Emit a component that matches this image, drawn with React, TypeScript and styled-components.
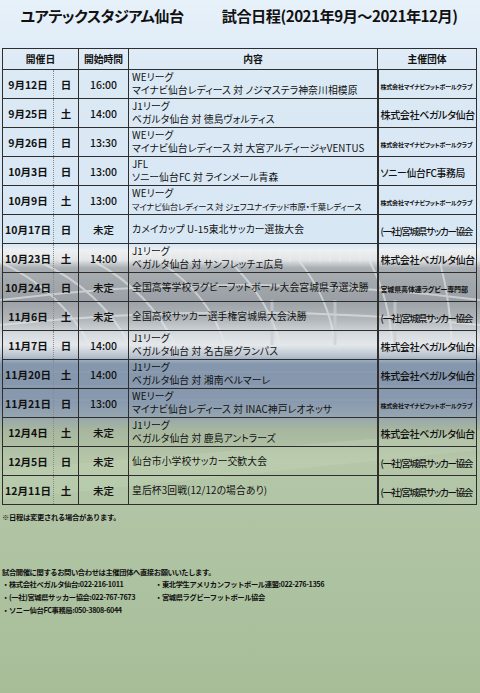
import styled, { createGlobalStyle } from "styled-components";

const GlobalStyle = createGlobalStyle`
  html, body {
    margin: 0;
    padding: 0;
  }
  body {
    font-family: "Noto Sans CJK JP", "Noto Sans", sans-serif;
    color: #111;
  }
`;

const Page = styled.div`
  position: relative;
  width: 480px;
  height: 693px;
  overflow: hidden;
  background: linear-gradient(
    to bottom,
    #e7f1fa 0px,
    #dbe9f5 80px,
    #d8e7f4 245px,
    #eef0f1 250px,
    #e2e5e7 260px,
    #a9aeb2 268px,
    #9aa0a5 300px,
    #b2b7bb 320px,
    #d6dbdf 334px,
    #e4e8eb 345px,
    #b9c3cf 356px,
    #8597ad 364px,
    #8899af 400px,
    #94a4b0 415px,
    #a7b79e 430px,
    #b5c6a9 460px,
    #aec3a2 560px,
    #a7bd98 693px
  );
`;

const Backdrop = styled.svg`
  position: absolute;
  inset: 0;
  width: 480px;
  height: 693px;
  pointer-events: none;
`;

const Content = styled.div`
  position: relative;
  z-index: 1;
  padding: 0 4px 0 2px;
`;

const Title = styled.h1`
  margin: 0;
  height: 30px;
  display: flex;
  align-items: center;
  justify-content: center;
  white-space: nowrap;
  font-size: 15.2px;
  font-weight: 700;
  font-feature-settings: "palt";
  letter-spacing: -0.5px;
  color: #111;
`;

const TitleGap = styled.span`
  display: inline-block;
  width: 38px;
`;

const Table = styled.table`
  margin-top: 18px;
  width: 474px;
  table-layout: fixed;
  border-collapse: collapse;
  border: 1px solid #2e2e2e;
`;

const HeadCell = styled.th`
  height: 20px;
  padding: 0;
  border: 1px solid #2e2e2e;
  font-size: 9.8px;
  font-weight: 700;
  line-height: 12px;
  text-align: center;
  vertical-align: middle;
`;

const Cell = styled.td<{ $dotRight?: boolean; $dotLeft?: boolean; $bold?: boolean }>`
  height: 28px;
  padding: 0;
  border: 1px solid #2e2e2e;
  ${(p) => (p.$dotRight ? "border-right: 1px dotted #8a8a8a;" : "")}
  ${(p) => (p.$dotLeft ? "border-left: 1px dotted #8a8a8a;" : "")}
  font-size: 10.5px;
  line-height: 13px;
  font-weight: ${(p) => (p.$bold ? 700 : 500)};
  text-align: center;
  vertical-align: middle;
  white-space: nowrap;
  overflow: hidden;
`;

const ContentCell = styled.td`
  height: 28px;
  padding: 0 0 0 3px;
  border: 1px solid #2e2e2e;
  vertical-align: middle;
  white-space: nowrap;
  overflow: hidden;
  font-feature-settings: "palt";
`;

const Line = styled.div<{ $small?: boolean }>`
  font-size: ${(p) => (p.$small ? "8.4px" : "9.8px")};
  line-height: 13px;
  height: 13px;
  letter-spacing: ${(p) => (p.$small ? "-0.2px" : "0.1px")};
`;

const OrgCell = styled.td`
  height: 28px;
  padding: 0 0 0 2px;
  border: 1px solid #2e2e2e;
  border-left: 2px solid #2e2e2e;
  vertical-align: middle;
  white-space: nowrap;
  overflow: hidden;
  font-feature-settings: "palt";
  line-height: 12px;
`;

type OrgKind = "tiny" | "large" | "mid" | "narrow" | "small";

const orgStyles: Record<OrgKind, string> = {
  tiny: "font-size: 6px; font-weight: 700; letter-spacing: -0.2px;",
  large: "font-size: 10.1px; font-weight: 500; letter-spacing: -0.45px;",
  mid: "font-size: 9.8px; font-weight: 500; letter-spacing: -0.3px;",
  narrow: "font-size: 9.5px; font-weight: 500; letter-spacing: -1.25px;",
  small: "font-size: 7px; font-weight: 700; letter-spacing: -0.15px;",
};

const Org = styled.span<{ $kind: OrgKind }>`
  ${(p) => orgStyles[p.$kind]}
`;

const Note = styled.p`
  margin: 7px 0 0 0;
  font-size: 7.3px;
  line-height: 10px;
  font-weight: 700;
  letter-spacing: -0.3px;
`;

const Contact = styled.div`
  margin-top: 44px;
  font-size: 7.3px;
  font-weight: 700;
  letter-spacing: -0.4px;
`;

const ContactLead = styled.div`
  line-height: 12px;
`;

const ContactGrid = styled.div`
  display: grid;
  grid-template-columns: 153px 1fr;
  row-gap: 1px;
  line-height: 12px;
`;

type Row = {
  date: string;
  day: string;
  time: string;
  lines: string[];
  smallSecond?: boolean;
  org: string;
  kind: OrgKind;
};

const MYNAVI = "株式会社マイナビフットボールクラブ";
const VEGALTA = "株式会社ベガルタ仙台";
const MIYAGI_FA = "(一社)宮城県サッカー協会";

const rows: Row[] = [
  { date: "9月12日", day: "日", time: "16:00", lines: ["WEリーグ", "マイナビ仙台レディース 対 ノジマステラ神奈川相模原"], org: MYNAVI, kind: "tiny" },
  { date: "9月25日", day: "土", time: "14:00", lines: ["J1リーグ", "ベガルタ仙台 対 徳島ヴォルティス"], org: VEGALTA, kind: "large" },
  { date: "9月26日", day: "日", time: "13:30", lines: ["WEリーグ", "マイナビ仙台レディース 対 大宮アルディージャVENTUS"], org: MYNAVI, kind: "tiny" },
  { date: "10月3日", day: "日", time: "13:00", lines: ["JFL", "ソニー仙台FC 対 ラインメール青森"], org: "ソニー仙台FC事務局", kind: "mid" },
  { date: "10月9日", day: "土", time: "13:00", lines: ["WEリーグ", "マイナビ仙台レディース 対 ジェフユナイテッド市原・千葉レディース"], smallSecond: true, org: MYNAVI, kind: "tiny" },
  { date: "10月17日", day: "日", time: "未定", lines: ["カメイカップ U-15東北サッカー選抜大会"], org: MIYAGI_FA, kind: "narrow" },
  { date: "10月23日", day: "土", time: "14:00", lines: ["J1リーグ", "ベガルタ仙台 対 サンフレッチェ広島"], org: VEGALTA, kind: "large" },
  { date: "10月24日", day: "日", time: "未定", lines: ["全国高等学校ラグビーフットボール大会宮城県予選決勝"], org: "宮城県高体連ラグビー専門部", kind: "small" },
  { date: "11月6日", day: "土", time: "未定", lines: ["全国高校サッカー選手権宮城県大会決勝"], org: MIYAGI_FA, kind: "narrow" },
  { date: "11月7日", day: "日", time: "14:00", lines: ["J1リーグ", "ベガルタ仙台 対 名古屋グランパス"], org: VEGALTA, kind: "large" },
  { date: "11月20日", day: "土", time: "14:00", lines: ["J1リーグ", "ベガルタ仙台 対 湘南ベルマーレ"], org: VEGALTA, kind: "large" },
  { date: "11月21日", day: "日", time: "13:00", lines: ["WEリーグ", "マイナビ仙台レディース 対 INAC神戸レオネッサ"], org: MYNAVI, kind: "tiny" },
  { date: "12月4日", day: "土", time: "未定", lines: ["J1リーグ", "ベガルタ仙台 対 鹿島アントラーズ"], org: VEGALTA, kind: "large" },
  { date: "12月5日", day: "日", time: "未定", lines: ["仙台市小学校サッカー交歓大会"], org: MIYAGI_FA, kind: "narrow" },
  { date: "12月11日", day: "土", time: "未定", lines: ["皇后杯3回戦(12/12の場合あり)"], org: MIYAGI_FA, kind: "narrow" },
];

const StadiumLines = () => (
  <Backdrop viewBox="0 0 480 693" aria-hidden="true">
    <g stroke="#f2f4f5" strokeWidth="1" opacity="0.55">
      {Array.from({ length: 48 }).map((_, i) => (
        <line key={i} x1={i * 10} y1="249" x2={i * 10} y2="262" />
      ))}
    </g>
    <g fill="none" stroke="#e8ebed" strokeWidth="2" opacity="0.6">
      <path d="M0 262 Q 60 290 90 345" />
      <path d="M40 262 Q 100 290 130 345" />
      <path d="M95 262 Q 150 292 175 345" />
      <path d="M160 262 Q 210 295 225 345" />
      <path d="M230 262 Q 270 300 280 345" />
      <path d="M300 262 Q 330 300 335 345" />
      <path d="M370 262 Q 390 300 392 345" />
      <path d="M440 262 Q 450 300 452 345" />
      <path d="M0 300 Q 240 270 480 300" />
      <path d="M0 325 Q 240 300 480 325" />
    </g>
    <g stroke="#c9ced2" strokeWidth="3" opacity="0.7">
      <line x1="272" y1="300" x2="272" y2="345" />
      <line x1="335" y1="300" x2="335" y2="345" />
      <line x1="395" y1="300" x2="395" y2="345" />
    </g>
    <g stroke="#9aa9bb" strokeWidth="1" opacity="0.5">
      <line x1="0" y1="372" x2="480" y2="372" />
      <line x1="0" y1="386" x2="480" y2="386" />
      <line x1="0" y1="400" x2="480" y2="400" />
    </g>
    <path d="M0 470 L480 430 L480 450 L0 500 Z" fill="#c4d3b8" opacity="0.35" />
  </Backdrop>
);

export default function App() {
  return (
    <>
      <GlobalStyle />
      <Page>
        <StadiumLines />
        <Content>
          <Title>
            ユアテックスタジアム仙台
            <TitleGap />
            試合日程(2021年9月～2021年12月)
          </Title>
          <Table>
            <colgroup>
              <col style={{ width: 51 }} />
              <col style={{ width: 25 }} />
              <col style={{ width: 50 }} />
              <col style={{ width: 249 }} />
              <col style={{ width: 99 }} />
            </colgroup>
            <thead>
              <tr>
                <HeadCell colSpan={2}>開催日</HeadCell>
                <HeadCell>開始時間</HeadCell>
                <HeadCell>内容</HeadCell>
                <HeadCell>主催団体</HeadCell>
              </tr>
            </thead>
            <tbody>
              {rows.map((r) => (
                <tr key={r.date}>
                  <Cell $dotRight $bold>
                    {r.date}
                  </Cell>
                  <Cell $dotLeft $bold>
                    {r.day}
                  </Cell>
                  <Cell>{r.time}</Cell>
                  <ContentCell>
                    {r.lines.map((l, i) => (
                      <Line key={i} $small={r.smallSecond && i === 1}>
                        {l}
                      </Line>
                    ))}
                  </ContentCell>
                  <OrgCell>
                    <Org $kind={r.kind}>{r.org}</Org>
                  </OrgCell>
                </tr>
              ))}
            </tbody>
          </Table>
          <Note>※日程は変更される場合があります。</Note>
          <Contact>
            <ContactLead>試合開催に関するお問い合わせは主催団体へ直接お願いいたします。</ContactLead>
            <ContactGrid>
              <span>・株式会社ベガルタ仙台:022-216-1011</span>
              <span>・東北学生アメリカンフットボール連盟:022-276-1356</span>
              <span>・(一社)宮城県サッカー協会:022-767-7673</span>
              <span>・宮城県ラグビーフットボール協会</span>
              <span>・ソニー仙台FC事務局:050-3808-6044</span>
            </ContactGrid>
          </Contact>
        </Content>
      </Page>
    </>
  );
}
